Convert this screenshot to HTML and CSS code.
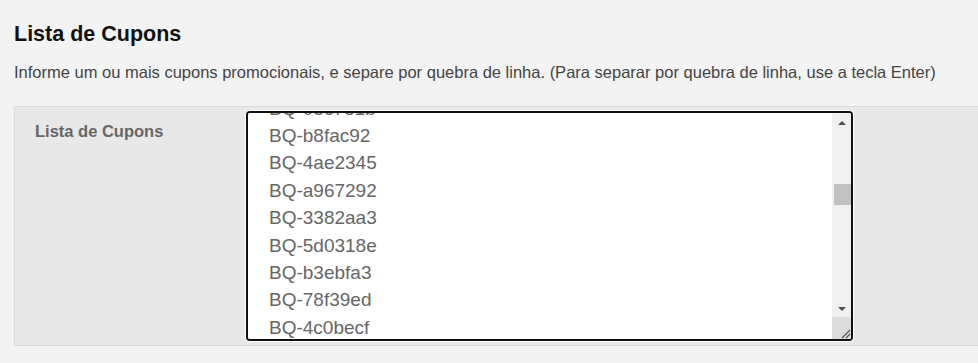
FILE: index.html
```html
<!DOCTYPE html>
<html lang="pt-BR">

<head>
    <meta charset="UTF-8">
    <title>Lista de Cupons</title>
    <link rel="stylesheet" href="styles.css">
</head>

<body>
    <div class="pagina">
        <h2 class="titulo">Lista de Cupons</h2>
        <p class="info">Informe um ou mais cupons promocionais, e separe por quebra de linha. (Para separar por quebra de linha, use a tecla Enter)</p>

        <div class="campo">
            <label class="rotulo" for="cupons">Lista de Cupons</label>
            <div class="caixa">
                <textarea id="cupons" class="cupons" spellcheck="false">BQ-1f3a9c0
BQ-7be4412
BQ-c02d8e5
BQ-9a61f7b
BQ-e5530c2
BQ-0d7e19a
BQ-64bf2e8
BQ-a13c5d0
BQ-5f8e2b7
BQ-d2a0946
BQ-3c9fb1e
BQ-8e61a4d
BQ-f07c3b2
BQ-2ad5e90
BQ-b61f0c8
BQ-47e9d3a
BQ-c8b2a15
BQ-19d4f6e
BQ-e7a3c01
BQ-6b0e5d9
BQ-a4f82c3
BQ-05c7e1b
BQ-b8fac92
BQ-4ae2345
BQ-a967292
BQ-3382aa3
BQ-5d0318e
BQ-b3ebfa3
BQ-78f39ed
BQ-4c0becf
BQ-91de7a0
BQ-2f6c4b8
BQ-d03a9e5
BQ-7c1b2f4
BQ-e48d06a
BQ-0b9f3c7
BQ-56a2e1d
BQ-c3f7b90
BQ-8d0e4a2
BQ-f1b6c53
BQ-29e8d0f
BQ-a7c41b6
BQ-6e03f9d
BQ-b2d95a1
BQ-4f7a0e8
BQ-d96c2b3
BQ-13b8e7f
BQ-e0a5d42
BQ-7f2c9b0
BQ-c5e61a8
BQ-3a0d7f9
BQ-98b4c2e
BQ-f6e1a03
BQ-21c9d7b
BQ-bd40e5f
BQ-5e7b3a2
BQ-a0f8c6d
BQ-6c3e91a
BQ-e92a4b7
BQ-0f5d8c1
BQ-84a7e2b
BQ-c71f0d9
BQ-3b6e5a4
BQ-d8c2f17
BQ-4e9a0b3
BQ-f3d71c6
BQ-7a4b8e0
BQ-1c6f2d5</textarea>
                <!-- barra de rolagem desenhada por cima (o navegador esconde a nativa) -->
                <div class="barra">
                    <span class="seta cima"></span>
                    <div class="trilho"><span class="pegador"></span></div>
                    <span class="seta baixo"></span>
                    <span class="canto">
                        <svg width="19" height="22" viewBox="0 0 19 22">
                            <path d="M10 21 L18 13 M14 21 L18 17" stroke="#555" stroke-width="1.2" fill="none" />
                        </svg>
                    </span>
                </div>
            </div>
        </div>
    </div>
    <script>
        // deixa a lista rolada como no print
        let lista = document.querySelector("#cupons");
        lista.scrollTop = 603;
    </script>
</body>

</html>
```

FILE: styles.css
```css
body {
    margin: 0;
    background-color: #f3f3f3;
    font-family: "Liberation Sans", Arial, sans-serif;
}

.pagina {
    padding: 22px 0 0 14px;
}

.titulo {
    margin: 0;
    font-size: 21.5px;
    line-height: 24px;
    color: #111;
}

.info {
    margin: 17px 0 0 0;
    font-size: 16.5px;
    line-height: 19px;
    color: #444;
}

.campo {
    margin-top: 24px;
    display: flex;
    align-items: flex-start;
    background-color: #e8e8e8;
    border: 1px solid #dcdcdc;
    border-right: 0;
    padding: 4px 0 4px 20px;
}

.rotulo {
    width: 211px;
    padding-top: 11px;
    font-size: 16.5px;
    line-height: 19px;
    font-weight: bold;
    color: #666;
}

.caixa {
    position: relative;
    display: flex;
}

.cupons {
    width: 607px;
    height: 230px;
    box-sizing: border-box;
    margin: 0;
    padding: 9px 19px 8px 21px;
    border: 2px solid #111;
    border-radius: 4px;
    box-shadow: 0 0 0 1px #fff;
    outline: none;
    background-color: #fff;
    font-family: "Liberation Sans", Arial, sans-serif;
    font-size: 19px;
    line-height: 27.4px;
    color: #666;
    overflow-y: scroll;
    scrollbar-width: none;
    resize: none;
}

.barra {
    position: absolute;
    top: 2px;
    right: 2px;
    bottom: 2px;
    width: 19px;
    display: flex;
    flex-direction: column;
    background-color: #f0f0f0;
    border-top-right-radius: 2px;
    border-bottom-right-radius: 2px;
    overflow: hidden;
}

.seta {
    height: 19px;
    display: flex;
    align-items: center;
    justify-content: center;
}

.seta::after {
    content: "";
    border-left: 4px solid transparent;
    border-right: 4px solid transparent;
}

.cima::after {
    border-bottom: 4px solid #505050;
    margin-top: 1px;
}

.baixo::after {
    border-top: 4px solid #505050;
    margin-top: 2px;
}

.trilho {
    flex: 1;
    padding-top: 52px;
}

.pegador {
    display: block;
    height: 21px;
    margin-left: 2px;
    background-color: #c1c1c1;
}

.canto {
    height: 22px;
    background-color: #dcdcdc;
}

.canto svg {
    display: block;
}
```
